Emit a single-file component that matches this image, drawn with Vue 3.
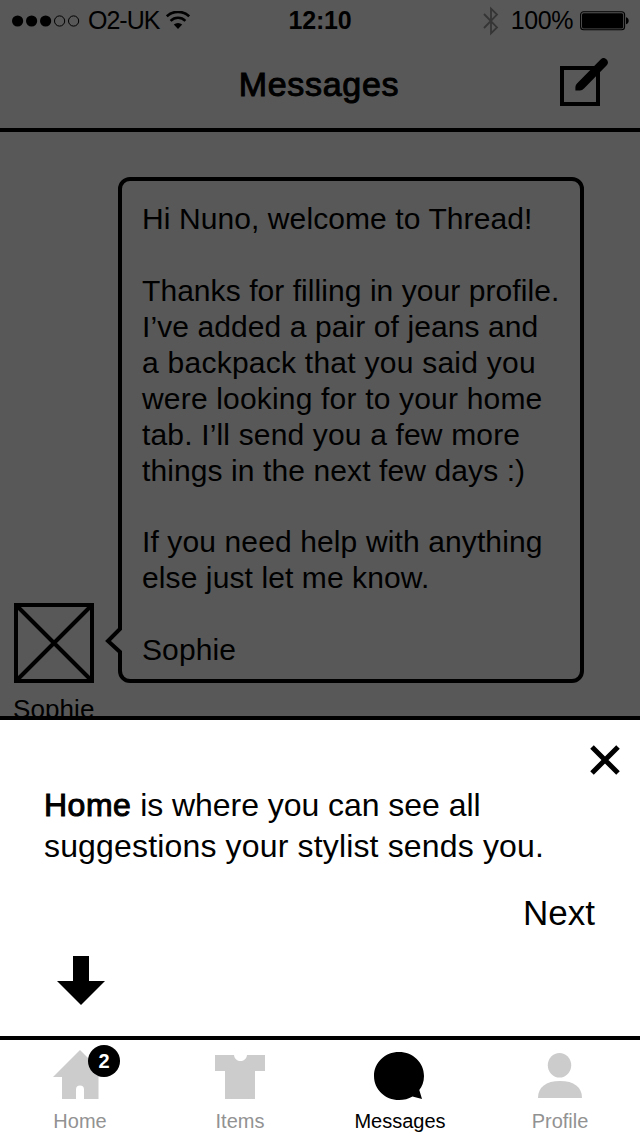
<script setup>
const message = [
  { text: 'Hi Nuno, welcome to Thread!', spacing: '0.09px' },
  { text: '' },
  { text: 'Thanks for filling in your profile.', spacing: '0.06px' },
  { text: 'I’ve added a pair of jeans and', spacing: '0.09px' },
  { text: 'a backpack that you said you', spacing: '0.25px' },
  { text: 'were looking for to your home', spacing: '0.18px' },
  { text: 'tab. I’ll send you a few more', spacing: '0.16px' },
  { text: 'things in the next few days :)', spacing: '0.1px' },
  { text: '' },
  { text: 'If you need help with anything', spacing: '0.12px' },
  { text: 'else just let me know.', spacing: '0.1px' },
  { text: '' },
  { text: 'Sophie', spacing: '0.1px' },
]
</script>

<template>
  <div class="screen">
    <header class="status">
      <div class="carrier">
        <svg class="dots" width="68" height="12" viewBox="0 0 68 12">
          <circle cx="5.6" cy="6" r="5.6" />
          <circle cx="19.6" cy="6" r="5.6" />
          <circle cx="33.6" cy="6" r="5.6" />
          <circle cx="47.6" cy="6" r="5.1" fill="none" stroke="#000" />
          <circle cx="61.6" cy="6" r="5.1" fill="none" stroke="#000" />
        </svg>
        <span class="operator">O2-UK</span>
        <svg class="wifi" width="24" height="18" viewBox="0 0 24 18">
          <path d="M.8 5.4a16 16 0 0 1 22.4 0" fill="none" stroke="#000" stroke-width="2.6" />
          <path d="M4.6 9.8a10.6 10.6 0 0 1 14.8 0" fill="none" stroke="#000" stroke-width="2.5" />
          <path d="M7.8 13.6a6.2 6.2 0 0 1 8.4 0L12 18z" />
        </svg>
      </div>
      <div class="clock">12:10</div>
      <div class="power">
        <svg class="bluetooth" width="16" height="30" viewBox="0 0 16 30">
          <path d="M1 8 14 21.4 8 27.4V2.6l6 6L1 22" fill="none" stroke="#353535" stroke-width="1.8" />
        </svg>
        <span class="percent">100%</span>
        <svg class="battery" width="50" height="20" viewBox="0 0 50 20">
          <rect x=".6" y=".8" width="44" height="18" rx="3" fill="none" stroke="#000" stroke-width="1.1" />
          <rect x="2" y="2.2" width="41.2" height="15.2" rx="1.6" />
          <path d="M46 6.3c3.6.8 3.6 6.2 0 7z" />
        </svg>
      </div>
    </header>

    <div class="nav">
      <h1>Messages</h1>
      <svg class="compose" width="50" height="50" viewBox="0 0 50 50">
        <rect x="2" y="10" width="36" height="36" fill="none" stroke="#000" stroke-width="4" />
        <path d="M15.4 32.6V29Q15.6 27 17 25.6L40.6 1.4Q43.4-1.4 46.4 1.2 49.2 4 47 7L24 30.4Q22.200 32.4 20 32.4Z" />
      </svg>
    </div>

    <main class="thread">
      <div class="sender">
        <svg width="80" height="80" viewBox="0 0 80 80" fill="none" stroke="#000" stroke-width="4">
          <rect x="2" y="2" width="76" height="76" />
          <path d="M3 3 77 77M77 3 3 77" />
        </svg>
        <div class="name">Sophie</div>
      </div>
      <div class="bubble">
        <svg class="tail" width="18" height="30" viewBox="0 0 18 30">
          <path d="M13 2H18V28H13Z" fill="#585858" />
          <path d="M15 0V3L3 15 15 26V30" fill="none" stroke="#000" stroke-width="4" />
        </svg>
        <div v-for="(line, i) in message" :key="i" class="line" :style="{ letterSpacing: line.spacing }">{{ line.text }}</div>
      </div>
    </main>

    <section class="coach">
      <svg class="close" width="30" height="30" viewBox="0 0 30 30">
        <path d="M2 2 28 28M28 2 2 28" stroke="#000" stroke-width="5" />
      </svg>
      <p><b>Home</b> is where you can see all<br /><span>suggestions your stylist sends you.</span></p>
      <div class="next">Next</div>
      <svg class="arrow" width="48" height="49" viewBox="0 0 48 49">
        <path d="M16 0H32V25H48L24 49 0 25H16Z" />
      </svg>
    </section>

    <footer class="tabs">
      <div class="tab">
        <div class="icon">
          <svg width="54" height="50" viewBox="0 0 54 50">
            <path d="M27 0 54 27H45.5V49H31V39.5a4 4 0 0 0-8 0V49H9V27H0Z" />
          </svg>
          <span class="badge">2</span>
        </div>
        <span>Home</span>
      </div>
      <div class="tab">
        <div class="icon">
          <svg width="50" height="50" viewBox="0 0 50 50">
            <path d="M0 5H19C20 13 31 13 32 5H50V21H40V49H10V21H0Z" />
          </svg>
        </div>
        <span>Items</span>
      </div>
      <div class="tab active">
        <div class="icon">
          <svg width="52" height="50" viewBox="0 0 52 50">
            <path d="M25 2C39 2 50 12.5 50 26 50 32 48 36.5 45.3 40L48 49 38.5 46.5C34.5 49 30 50 25 50 11 50 0 39.5 0 26S11 2 25 2Z" />
          </svg>
        </div>
        <span>Messages</span>
      </div>
      <div class="tab">
        <div class="icon">
          <svg width="44" height="50" viewBox="0 0 44 50">
            <ellipse cx="21.5" cy="15.3" rx="11.7" ry="12.3" />
            <path d="M0 48C0 37 8 31 22 31S44 37 44 48Z" />
          </svg>
        </div>
        <span>Profile</span>
      </div>
    </footer>
  </div>
</template>

<style>
body {
  margin: 0;
  background: #fff;
}
</style>

<style scoped>
.screen {
  width: 640px;
  height: 1136px;
  display: flex;
  flex-direction: column;
  overflow: hidden;
  background: #585858;
  color: #000;
  font-family: "Liberation Sans", Arial, sans-serif;
}
svg {
  display: block;
  flex: none;
}
.status {
  height: 40px;
  flex: none;
  display: grid;
  grid-template-columns: 1fr 80px 1fr;
  align-items: center;
  font-size: 25px;
  line-height: 41px;
}
.carrier {
  display: flex;
  align-items: center;
  padding-left: 12px;
}
.operator {
  margin-left: 8px;
  width: 71px;
  letter-spacing: -1px;
  white-space: nowrap;
}
.wifi {
  margin-left: 7px;
  margin-top: -1px;
}
.clock {
  text-align: center;
  font-weight: bold;
  letter-spacing: -0.2px;
}
.power {
  display: flex;
  align-items: center;
  justify-content: flex-end;
  padding-right: 10px;
}
.percent {
  margin: 0 7px 0 12px;
  letter-spacing: -0.4px;
}
.nav {
  height: 88px;
  flex: none;
  display: grid;
  grid-template-columns: 1fr 240px 1fr;
  border-bottom: 4px solid #000;
}
h1 {
  grid-column: 2;
  margin: 0 2px 0 0;
  text-align: center;
  font-size: 34px;
  font-weight: normal;
  line-height: 88px;
  letter-spacing: 0.7px;
  -webkit-text-stroke: 1px #000;
}
.compose {
  justify-self: end;
  margin: 18px 30px 0 0;
}
.thread {
  height: 584px;
  flex: none;
  display: flex;
  align-items: flex-start;
  overflow: hidden;
}
.sender {
  width: 80px;
  margin: 471px 24px 0 14px;
}
.name {
  margin: 11px 0 0 -1px;
  font-size: 26px;
  line-height: 30px;
  letter-spacing: 0.1px;
}
.bubble {
  position: relative;
  box-sizing: border-box;
  width: 466px;
  height: 506px;
  margin-top: 45px;
  padding: 20.3px 0 0 20px;
  border: 4px solid #000;
  border-radius: 12px;
  font-size: 30px;
  line-height: 36px;
}
.tail {
  position: absolute;
  left: -17px;
  top: 445px;
}
.line {
  height: 35.9px;
  white-space: nowrap;
}
.coach {
  height: 316px;
  flex: none;
  display: flex;
  flex-direction: column;
  align-items: flex-start;
  border-top: 4px solid #000;
  background: #fff;
}
.close {
  align-self: flex-end;
  margin: 25px 20px 0 0;
}
p {
  margin: 10px 0 0 44px;
  font-size: 32px;
  line-height: 41px;
  letter-spacing: -0.05px;
  white-space: nowrap;
}
p b {
  font-weight: normal;
  letter-spacing: 0.5px;
  -webkit-text-stroke: 1px #000;
}
p span {
  letter-spacing: 0.16px;
}
.next {
  align-self: flex-end;
  margin: 26px 45px 0 0;
  font-size: 35px;
  line-height: 39px;
}
.arrow {
  margin: 24px 0 0 57px;
}
.tabs {
  height: 96px;
  flex: none;
  display: grid;
  grid-template-columns: repeat(4, 1fr);
  border-top: 4px solid #000;
  background: #fff;
  font-size: 20px;
  color: #929292;
}
.tab {
  display: flex;
  flex-direction: column;
  align-items: center;
  line-height: 24px;
}
.icon {
  position: relative;
  margin: 10px 0 9px;
  fill: #ccc;
}
.active {
  color: #000;
}
.active .icon {
  fill: #000;
}
.badge {
  position: absolute;
  left: 35px;
  top: -5px;
  width: 32px;
  height: 32px;
  border-radius: 50%;
  background: #000;
  color: #fff;
  font-weight: bold;
  line-height: 32px;
  text-align: center;
}
</style>
